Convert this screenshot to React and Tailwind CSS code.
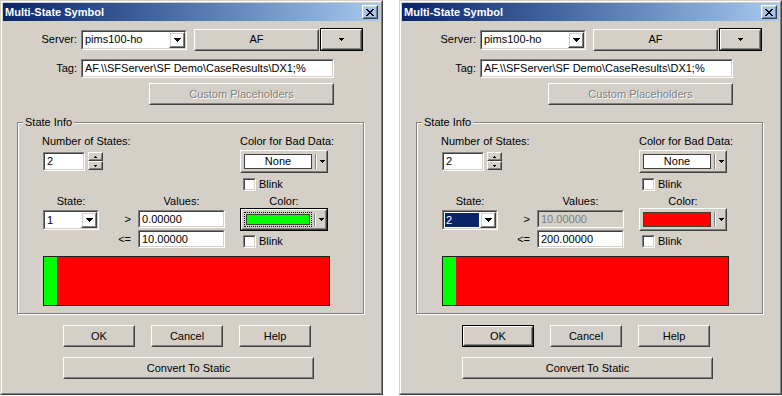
import React from "react";

// pixel triangles, drawn row by row so they stay crisp
const Tri = ({ size = 4, up = false }) => {
  const w = size * 2 - 1;
  return (
    <svg width={w} height={size} shapeRendering="crispEdges">
      {Array.from({ length: size }, (_, i) => (
        <rect key={i} x={i} y={up ? size - 1 - i : i} width={w - 2 * i} height={1} fill="#000" />
      ))}
    </svg>
  );
};

const CloseGlyph = () => {
  const rows = ["11000011", "01100110", "00111100", "00011000", "00111100", "01100110", "11000011"];
  return (
    <svg width={8} height={7} shapeRendering="crispEdges">
      {rows.map((r, y) =>
        r.split("").map((c, x) => (c === "1" ? <rect key={`${x}-${y}`} x={x} y={y} width={1} height={1} fill="#000" /> : null))
      )}
    </svg>
  );
};

const Bevel = ({ className = "", inner = "", children }) => (
  <div className={`border border-t-white border-l-white border-r-[#404040] border-b-[#404040] ${className}`}>
    <div className={`h-full w-full border border-t-[#d4d0c8] border-l-[#d4d0c8] border-r-[#808080] border-b-[#808080] ${inner}`}>
      {children}
    </div>
  </div>
);

const Sunken = ({ className = "", bg = "bg-white", inner = "", children }) => (
  <div className={`border border-t-[#808080] border-l-[#808080] border-r-white border-b-white ${className}`}>
    <div className={`h-full w-full border border-t-[#404040] border-l-[#404040] border-r-[#d4d0c8] border-b-[#d4d0c8] ${bg} ${inner}`}>
      {children}
    </div>
  </div>
);

const Btn = ({ className = "", def, disabled, children }) => {
  const label = disabled ? (
    <span className="text-[#808080] [text-shadow:1px_1px_0_#fff]">{children}</span>
  ) : (
    children
  );
  if (def) {
    return (
      <div className={`border border-black ${className}`}>
        <Bevel className="h-full w-full" inner="flex items-center justify-center">
          {label}
        </Bevel>
      </div>
    );
  }
  return (
    <Bevel className={className} inner="flex items-center justify-center">
      {label}
    </Bevel>
  );
};

const Combo = ({ className = "", value, sel }) => (
  <Sunken className={className}>
    <div className="flex h-full">
      <div className="flex min-w-0 flex-1 items-center p-px">
        {sel ? (
          <div className="flex h-full flex-1 items-center bg-[#0a246a] pl-px text-white">{value}</div>
        ) : (
          <span className="pl-px">{value}</span>
        )}
      </div>
      <Bevel className="h-full w-[16px]" inner="flex items-center justify-center">
        <Tri size={4} />
      </Bevel>
    </div>
  </Sunken>
);

const ColorCombo = ({ focus, swatch, label }) => {
  const body = (
    <Bevel className="h-full w-full" inner="flex items-stretch p-px">
      <div className={`flex flex-1 ${focus ? "border border-dotted border-black p-px" : "p-px"}`}>
        <div className={`flex flex-1 items-center justify-center border border-[#404040] ${swatch}`}>{label}</div>
      </div>
      <div className="mx-[2px] my-px w-[2px] border-l border-r border-l-[#808080] border-r-white" />
      <div className="flex w-[6px] items-center justify-center">
        <Tri size={3} />
      </div>
    </Bevel>
  );
  return focus ? (
    <div className="h-[23px] w-[88px] border border-black">{body}</div>
  ) : (
    <div className="h-[23px] w-[88px]">{body}</div>
  );
};

const Blink = () => (
  <div className="flex h-[13px] items-center">
    <Sunken className="ml-[3px] h-[13px] w-[13px]" />
    <span className="ml-[3px]">Blink</span>
  </div>
);

const Edit = ({ className = "", value, disabled }) => (
  <Sunken
    className={className}
    bg={disabled ? "bg-[#d4d0c8]" : "bg-white"}
    inner={`flex items-center pl-[2px] ${disabled ? "text-[#808080]" : ""}`}
  >
    {value}
  </Sunken>
);

const Dialog = ({ second }) => (
  <div className="h-[395px] w-[383px] shrink-0 border border-t-[#d4d0c8] border-l-[#d4d0c8] border-r-[#404040] border-b-[#404040] bg-[#d4d0c8]">
    <div className="flex h-full w-full flex-col border border-t-white border-l-white border-r-[#808080] border-b-[#808080] p-px">
      {/* Title bar */}
      <div className="flex h-[18px] shrink-0 items-center justify-between bg-linear-to-r from-[#0a246a] to-[#a6caf0] pl-[2px] pr-[2px]">
        <span className="font-bold text-white">Multi-State Symbol</span>
        <Bevel className="h-[14px] w-[16px]" inner="flex items-center justify-center">
          <CloseGlyph />
        </Bevel>
      </div>

      {/* Server row */}
      <div className="mt-[7px] flex h-[23px] items-center">
        <span className="w-[74px] text-right">Server:</span>
        <Combo className="ml-[4px] h-[20px] w-[106px]" value="pims100-ho" />
        <Btn className="ml-[7px] h-[22px] w-[125px]">AF</Btn>
        <Btn className="ml-px h-[23px] w-[43px]" def>
          <Tri size={3} />
        </Btn>
      </div>

      {/* Tag row */}
      <div className="mt-[8px] flex h-[19px] items-center">
        <span className="w-[74px] text-right">Tag:</span>
        <Edit className="ml-[4px] h-[19px] w-[253px]" value="AF.\\SFServer\SF Demo\CaseResults\DX1;%" />
      </div>

      <Btn className="ml-[146px] mt-[5px] h-[22px] w-[185px]" disabled>
        Custom Placeholders
      </Btn>

      {/* State Info group */}
      <div className="ml-[14px] mt-[17px] w-[347px] border border-[#808080] pb-[7px] shadow-[inset_1px_1px_0_#fff,1px_1px_0_#fff]">
        <div className="-mt-[7px] ml-[5px] w-fit bg-[#d4d0c8] px-[2px]">State Info</div>

        <div className="mt-[6px] flex">
          <div className="ml-[24px] w-[198px]">
            <div>Number of States:</div>
            <div className="ml-px mt-[4px] flex">
              <Edit className="h-[19px] w-[42px]" value="2" />
              <div className="ml-[3px] flex h-[18px] w-[15px] flex-col">
                <Bevel className="h-[9px] w-full" inner="flex items-center justify-center">
                  <Tri size={2} up />
                </Bevel>
                <Bevel className="h-[9px] w-full" inner="flex items-center justify-center">
                  <Tri size={2} />
                </Bevel>
              </div>
            </div>
          </div>
          <div className="flex flex-col">
            <div>Color for Bad Data:</div>
            <div className="mt-[2px]">
              <ColorCombo swatch="bg-white" label="None" />
            </div>
            <div className="mt-[5px]">
              <Blink />
            </div>
          </div>
        </div>

        <div className="mt-[4px] flex">
          <div className="ml-[25px] flex w-[56px] flex-col">
            <div className="text-center">State:</div>
            <Combo className="mt-[2px] h-[20px] w-[56px]" value={second ? "2" : "1"} sel={second} />
          </div>
          <div className="ml-[11px] flex flex-col">
            <div className="ml-[28px] w-[87px] text-center">Values:</div>
            <div className="mt-[2px] flex items-center">
              <span className="w-[21px] text-right">&gt;</span>
              <Edit className="ml-[7px] h-[18px] w-[87px]" value={second ? "10.00000" : "0.00000"} disabled={second} />
            </div>
            <div className="mt-[2px] flex items-center">
              <span className="w-[21px] text-right">&lt;=</span>
              <Edit className="ml-[7px] h-[18px] w-[87px]" value={second ? "200.00000" : "10.00000"} />
            </div>
          </div>
          <div className="ml-[15px] flex flex-col">
            <div className="text-center">Color:</div>
            <ColorCombo focus={!second} swatch={second ? "bg-[#ff0000]" : "bg-[#00ff00]"} />
            <div className="mt-[4px]">
              <Blink />
            </div>
          </div>
        </div>

        <div className="ml-[25px] mt-[8px] flex h-[50px] w-[287px] border border-[#202020]">
          <div className="w-[13px] bg-[#00ff00]" />
          <div className="flex-1 bg-[#ff0000]" />
        </div>
      </div>

      {/* Buttons */}
      <div className="ml-[60px] mt-[11px] flex gap-[16px]">
        <Btn className="h-[22px] w-[72px]" def={second}>
          OK
        </Btn>
        <Btn className="h-[22px] w-[72px]">Cancel</Btn>
        <Btn className="h-[22px] w-[72px]">Help</Btn>
      </div>
      <Btn className="ml-[60px] mt-[10px] h-[22px] w-[251px]">Convert To Static</Btn>
    </div>
  </div>
);

export default function App() {
  return (
    <div className="flex h-[396px] w-[782px] overflow-hidden bg-white font-['Liberation_Sans',Arial,sans-serif] text-[11px] leading-[13px] text-black">
      <Dialog />
      <div className="ml-[16px]">
        <Dialog second />
      </div>
    </div>
  );
}
